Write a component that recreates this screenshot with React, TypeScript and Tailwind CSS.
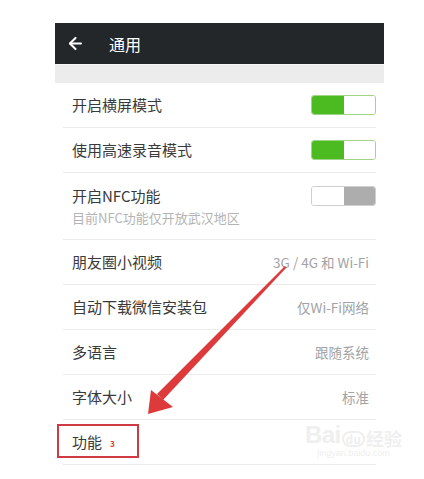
import { ArrowLeft } from "lucide-react"

const font = { fontFamily: '"Noto Sans CJK SC", "Noto Sans", sans-serif' }

type Row = {
  label: string
  value?: string
  toggle?: "on" | "off"
  note?: string
  badge?: string
}

const rows: Row[] = [
  { label: "开启横屏模式", toggle: "on" },
  { label: "使用高速录音模式", toggle: "on" },
  { label: "开启NFC功能", toggle: "off", note: "目前NFC功能仅开放武汉地区" },
  { label: "朋友圈小视频", value: "3G / 4G 和 Wi-Fi" },
  { label: "自动下载微信安装包", value: "仅Wi-Fi网络" },
  { label: "多语言", value: "跟随系统" },
  { label: "字体大小", value: "标准" },
  { label: "功能", badge: "3" },
]

const Toggle = ({ on }: { on: boolean }) => (
  <div
    className={`-mr-[7px] flex h-[20px] w-[65px] overflow-hidden rounded-[3px] border ${
      on ? "border-[#9fd48a]" : "border-[#cfcfcf]"
    }`}
  >
    <div className={`flex-1 ${on ? "bg-[#4cbb22]" : "bg-white"}`} />
    <div className={`flex-1 ${on ? "bg-white" : "bg-[#adadad]"}`} />
  </div>
)

const SettingRow = ({ row }: { row: Row }) => (
  <div className="flex flex-col justify-center pl-[17px] pr-[15px]" style={{ height: row.note ? 66 : 44 }}>
    <div className="flex items-center justify-between">
      <div className="flex items-center gap-[8px]">
        <span className="text-[15px] leading-[22px] text-[#3a3a3a]">{row.label}</span>
        {row.badge && <span className="mt-[3px] text-[8px] font-bold text-[#d93a3a]">{row.badge}</span>}
      </div>
      {row.toggle && <Toggle on={row.toggle === "on"} />}
      {row.value && <span className="text-[13.5px] text-[#a3a3a3]">{row.value}</span>}
    </div>
    {row.note && <div className="mt-[2px] text-[13px] leading-[18px] text-[#b4b4b4]">{row.note}</div>}
  </div>
)

export default function App() {
  return (
    <div className="relative h-[479px] w-[424px] overflow-hidden bg-white" style={font}>
      <div className="ml-[55px] mt-[23px] w-[329px]">
        {/* Title bar */}
        <div className="flex h-[41px] items-center bg-[#232729] pl-[11px]">
          <ArrowLeft className="h-[19px] w-[19px] text-white" strokeWidth={2.6} />
          <span className="ml-[24px] text-[16px] text-white">通用</span>
        </div>
        <div className="h-[19px] border-t border-[#f6f6f6] bg-[#ececec]" />

        {/* List */}
        <div className="bg-white">
          {rows.map((row) => (
            <div key={row.label}>
              <SettingRow row={row} />
              <div className="mx-[8px] h-px bg-[#ececec]" />
            </div>
          ))}
        </div>
      </div>

      {/* Annotation: red box */}
      <div className="absolute left-[57px] top-[424px] h-[34px] w-[82px] border-2 border-[#cf3a44]" />

      {/* Annotation: red arrow */}
      <svg className="absolute left-0 top-0" width="424" height="479" viewBox="0 0 424 479">
        <polygon points="285,266 286.5,267.5 163,400 157,394" fill="#dd3b3b" />
        <polygon points="148,414 151,390 173,407" fill="#dd3b3b" />
      </svg>

      {/* Watermark */}
      <div className="absolute left-[305px] top-[423px] flex flex-col items-center text-[#efefef]">
        <div className="flex items-end leading-none">
          <span className="text-[24px] font-bold tracking-tight" style={{ fontFamily: '"Liberation Sans", sans-serif' }}>
            Bai
          </span>
          <span className="mx-[1px] rounded-full border-2 border-[#efefef] px-[2px] text-[12px] font-bold">du</span>
          <span className="text-[18px] font-bold">经验</span>
        </div>
        <span className="text-[9px] leading-[12px]" style={{ fontFamily: '"Liberation Sans", sans-serif' }}>
          jingyan.baidu.com
        </span>
      </div>
    </div>
  )
}
